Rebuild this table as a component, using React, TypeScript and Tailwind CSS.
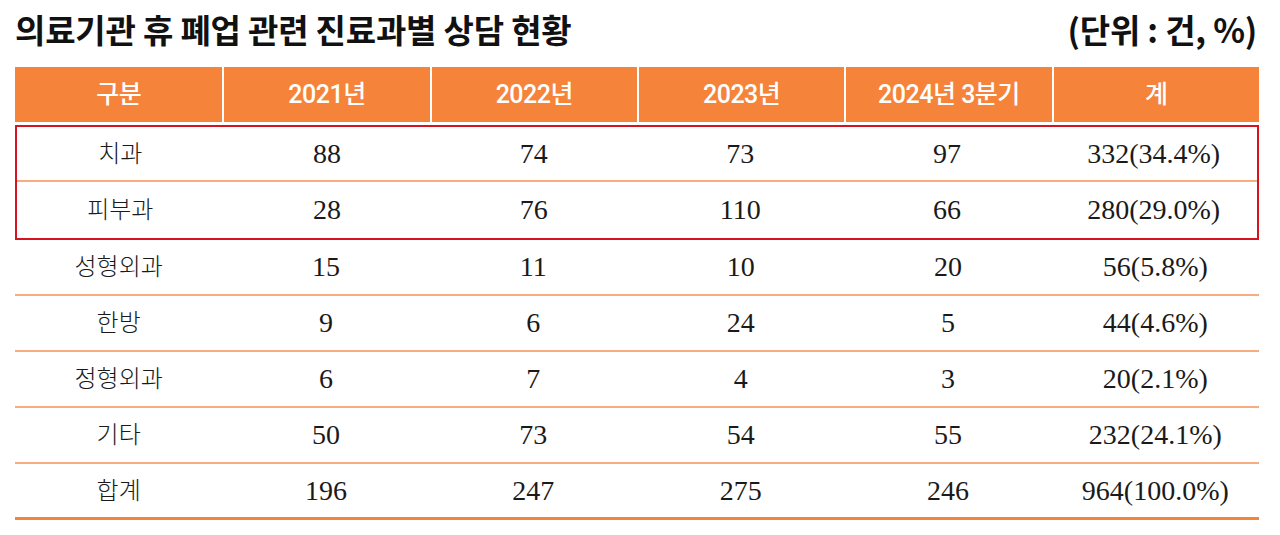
import React from "react";

const headers = ["구분", "2021년", "2022년", "2023년", "2024년 3분기", "계"];
const boxed = [
  ["치과", "88", "74", "73", "97", "332(34.4%)"],
  ["피부과", "28", "76", "110", "66", "280(29.0%)"],
];
const rest = [
  ["성형외과", "15", "11", "10", "20", "56(5.8%)"],
  ["한방", "9", "6", "24", "5", "44(4.6%)"],
  ["정형외과", "6", "7", "4", "3", "20(2.1%)"],
  ["기타", "50", "73", "54", "55", "232(24.1%)"],
  ["합계", "196", "247", "275", "246", "964(100.0%)"],
];

const serif = "font-['Liberation_Serif','Noto_Sans_CJK_KR',serif]";

function Row({ cells, className }: { cells: string[]; className: string }) {
  return (
    <div className={`grid grid-cols-6 items-center text-[28px] leading-none text-[#1a1a1a] ${className}`}>
      {cells.map((c, i) => (
        <div key={i} className={`text-center ${i === 0 ? "font-light text-[24px]" : ""}`}>
          {c}
        </div>
      ))}
    </div>
  );
}

export default function App() {
  return (
    <div className="w-[1280px] h-[535px] bg-white overflow-hidden">
      <div className="flex justify-between items-center px-[15px] h-[62px] pb-[4px]">
        <div className="font-['Noto_Sans_CJK_KR',sans-serif] font-bold text-[33px] text-[#111] tracking-[-0.2px] leading-none">
          의료기관 휴 폐업 관련 진료과별 상담 현황
        </div>
        <div className="font-['Noto_Sans_CJK_KR',sans-serif] font-bold text-[33px] text-[#111] tracking-[-0.2px] leading-none pr-[8px]">
          (단위 : 건, %)
        </div>
      </div>
      <div className="ml-[15px] w-[1244px] mt-[5px]">
        <div className="grid grid-cols-6 h-[55px] bg-[#f5843a] text-white font-['Roboto','Noto_Sans_CJK_KR',sans-serif] text-[25px] font-medium tracking-[-0.5px]">
          {headers.map((h, i) => (
            <div
              key={i}
              className={`flex items-center justify-center ${i > 0 ? "border-l-2 border-white" : ""}`}
            >
              {h}
            </div>
          ))}
        </div>
        <div className={`mt-[3px] border-2 border-[#d5141f] ${serif}`}>
          <Row cells={boxed[0]} className="h-[55px] border-b-2 border-[#f9ad7e]" />
          <Row cells={boxed[1]} className="h-[56px]" />
        </div>
        <div className={serif}>
          {rest.map((r, i) => (
            <Row
              key={i}
              cells={r}
              className={
                i === rest.length - 1
                  ? "h-[56px] border-b-[3px] border-[#f5843a]"
                  : "h-[56px] border-b-2 border-[#f9ad7e]"
              }
            />
          ))}
        </div>
      </div>
    </div>
  );
}
